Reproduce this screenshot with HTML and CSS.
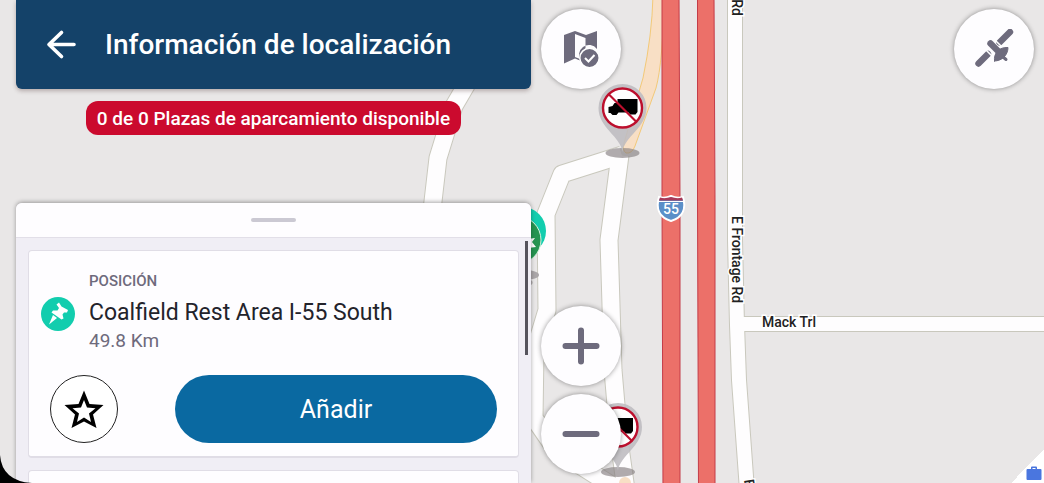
FILE: index.html
```html
<!DOCTYPE html>
<html lang="es">
<head>
<meta charset="utf-8">
<meta name="viewport" content="width=device-width, initial-scale=1">
<title>Información de localización</title>
<link rel="stylesheet" href="styles.css">
</head>
<body>
<main class="screen">
  <svg class="map" viewBox="0 0 1044 483" preserveAspectRatio="xMinYMin slice" aria-hidden="true">
    <defs>
      <g id="no-trucks">
        <ellipse cx="0" cy="45" rx="17" ry="5" fill="#857f81" fill-opacity=".65"/>
        <path d="M0 44C-2 28-24 20-24 0A24 24 0 0 1 24 0C24 20 2 28 0 44Z" fill="#bfbcc1" fill-opacity=".9"/>
        <circle r="19.500" fill="#fff" stroke="#bd0f2d" stroke-width="2.400"/>
        <path d="M-5-9H15V4L13 6.500H7.500L6 4.500H-4L-6 7H-10L-12 5H-14V-1L-10-2-8-5H-5Z" fill="#000"/>
        <path d="M-14-14 14 14" stroke="#bd0f2d" stroke-width="2.200"/>
      </g>
    </defs>
    <g class="road-edge">
      <path d="M475 70 454 106 438 158 432 210"/>
      <path d="M622 155 562 174 546 214 547 310 535 350 534 418 556 450 622 492"/>
      <path d="M620 155 609 240 613 370 619 440 626 490"/>
      <path class="frontage" d="M735 -5V240L737 325 739 380 747 490"/>
      <path class="frontage" d="M736 324H1050"/>
    </g>
    <g class="road">
      <path d="M475 70 454 106 438 158 432 210"/>
      <path d="M622 155 562 174 546 214 547 310 535 350 534 418 556 450 622 492"/>
      <path d="M620 155 609 240 613 370 619 440 626 490"/>
      <path class="frontage" d="M735 -5V240L737 325 739 380 747 490"/>
      <path class="frontage" d="M736 324H1050"/>
    </g>
    <path class="ramp" d="M653-4Q652 35 643 78L624 143Q622 150 626 153 632 154 635 146L656 88Q663 62 664-4Z"/>
    <circle cx="625" cy="483" r="6" fill="#f8dfc5"/>
    <path class="highway" d="M662-5H679L680 200V490H663L662 200Z"/>
    <path class="highway" d="M697.500-5H714L715 200V490H698.500L697.500 200Z"/>
    <g class="shield">
      <path d="M659 197Q665 199 671 196 677 199 683 197C686 207 684 217 671 221 658 217 656 207 659 197Z" fill="#5b8fc8" stroke="#fff" stroke-width="2"/>
      <path d="M660 197.500Q665 199 671 197 677 199 682 197.500L683 200.500H659Z" fill="#a83a58"/>
      <path d="M658 201.500H684" stroke="#fff"/>
      <text x="671" y="214" text-anchor="middle">55</text>
    </g>
    <g class="street">
      <text transform="translate(732 216) rotate(90)">E Frontage Rd</text>
      <text transform="translate(732 16) rotate(90)" text-anchor="end">Rd</text>
      <text transform="translate(744 480) rotate(82)">E</text>
      <text x="762" y="327">Mack Trl</text>
    </g>
    <g class="rest-pin">
      <ellipse cx="525" cy="275" rx="14" ry="5" fill="#aaa6a8"/>
      <circle cx="530" cy="282.500" r="2.500" fill="#aaa6a8"/>
      <circle cx="522" cy="231" r="24" fill="#12cdae"/>
      <circle cx="517" cy="240" r="24" fill="#259450" stroke="#d8f3df"/>
      <path d="M528 239l7-1-3 4 4 5-8 1Z" fill="#fff"/>
    </g>
    <use href="#no-trucks" x="622.500" y="108"/>
    <use href="#no-trucks" x="618" y="427"/>
  </svg>

  <section class="panel">
    <header class="bar">
      <button class="back" type="button" aria-label="Atrás">
        <svg viewBox="0 0 32 32" width="32" height="32"><path d="M16.500 3.500 4 15.500 16.500 27.500M4 15.500H29" fill="none" stroke="#fff" stroke-width="3.600" stroke-linecap="round" stroke-linejoin="round"/></svg>
      </button>
      <h1 class="title">Información de localización</h1>
    </header>
    <p class="status">0 de 0 Plazas de aparcamiento disponible</p>
    <div class="sheet">
      <div class="grip"><span class="grip-bar"></span></div>
      <div class="list">
        <article class="card">
          <div class="place">
            <svg class="place-icon" viewBox="0 0 34 34" width="34" height="34" aria-hidden="true">
              <circle cx="17" cy="17" r="17" fill="#12cdae"/>
              <path d="M15.500 7.500 18 5.500 20.500 9.500 27 13 26 15.500 23 15.500 21.500 17.500 22.500 21.500 20.500 22.500 10.500 15.500 12 13.500 16.500 13.500 18 11Z" fill="#fff"/>
              <path d="M12 18 16 21 8 27.500Z" fill="#fff"/>
            </svg>
            <div class="place-text">
              <p class="label">POSICIÓN</p>
              <h2 class="name">Coalfield Rest Area I-55 South</h2>
              <p class="distance">49.8 Km</p>
            </div>
          </div>
          <div class="actions">
            <button class="favorite" type="button" aria-label="Favorito">
              <svg viewBox="0 0 40 40" width="40" height="40"><path fill-rule="evenodd" d="M20 1.500 25.500 15 39.500 16 29 25.500 32.500 39 20 32.500 7.500 39 11 25.500.5 16 14.500 15ZM20 11 17 18.500 8.500 19.200 15 24.500 13 33 20 28.500 27 33 25 24.500 31.500 19.200 23 18.500Z"/></svg>
            </button>
            <button class="add" type="button">Añadir</button>
          </div>
        </article>
        <article class="card card-next"></article>
        <span class="thumb"></span>
      </div>
    </div>
  </section>

  <nav class="controls" aria-label="Controles del mapa">
    <button class="round" type="button" aria-label="Capas del mapa">
      <svg viewBox="0 0 40 40" width="40" height="40" fill="#6e6b7d">
        <path d="M3 6 14 2 25 6 36 2V20A10 10 0 0 0 20 32L14 29.500 3 34.500ZM14 5V28L19 30 24.500 20V9Z" fill-rule="evenodd"/>
        <circle cx="28.500" cy="29" r="9.700" stroke="#fff" stroke-width="1.500"/>
        <path d="m24 29 3.500 3.500 6-6.500" fill="none" stroke="#fff" stroke-width="2"/>
      </svg>
    </button>
    <button class="round zoom-in" type="button" aria-label="Acercar">
      <svg viewBox="0 0 40 40" width="40" height="40"><path class="sign" d="M4.500 20H35.500M20 4.500V35.500"/></svg>
    </button>
    <button class="round" type="button" aria-label="Alejar">
      <svg viewBox="0 0 40 40" width="40" height="40"><path class="sign" d="M4.500 20H35.500"/></svg>
    </button>
  </nav>

  <button class="round gps" type="button" aria-label="Satélite">
    <svg viewBox="0 0 40 40" width="40" height="40" fill="none" stroke="#6e6b7d" stroke-linecap="round">
      <path d="M36 3 25.500 13.500M4.500 34.500 14 25" stroke-width="6.400"/>
      <path d="m22 12 5 5M12.500 21.500l5 5" stroke="#fff" stroke-width="1.500"/>
      <path d="m16.500 14.500 8 8" stroke-width="6.400"/>
      <path d="M20.500 32C19.500 24 25 18 34 18.500 34 26 28 32 20.500 32Z" fill="#6e6b7d"/>
      <path d="m28 27 4 3.500" stroke-width="3"/>
    </svg>
  </button>

  <svg class="corner-left" viewBox="0 0 32 28" width="32" height="28" aria-hidden="true"><path d="M0 0Q2 26 32 28H0Z"/></svg>
  <div class="corner-right">
    <svg viewBox="0 0 16 14" width="16" height="14" aria-hidden="true"><path d="M5 3V1.500Q5 .5 6 .5H10Q11 .5 11 1.500V3H14.500Q15.500 3 15.500 4V13Q15.500 14 14.500 14H1.500Q.5 14 .5 13V4Q.5 3 1.500 3ZM6.500 3H9.500V2H6.500Z" fill="#4a76df" fill-rule="evenodd"/></svg>
  </div>
</main>
</body>
</html>
```
FILE: styles.css
```css
* { box-sizing: border-box; }

body {
  margin: 0;
  font-family: Roboto, "Liberation Sans", sans-serif;
}

h1, h2, p { margin: 0; }

button {
  display: grid;
  place-items: center;
  padding: 0;
  border: 0;
  font: inherit;
  cursor: pointer;
}

.screen {
  position: relative;
  display: grid;
  grid-template-columns: calc(50% + 1px) 80px 1fr;
  column-gap: 10px;
  height: 100vh;
  padding-left: 16px;
  overflow: hidden;
  background: #e9e7e7;
}

/* Map canvas */
.map {
  position: absolute;
  inset: 0;
  width: 100%;
  height: 100%;
}
.road-edge, .road { fill: none; stroke-linejoin: round; }
.road-edge { stroke: #c9c8bd; stroke-width: 19px; }
.road { stroke: #fefdfe; stroke-width: 17px; }
.road-edge .frontage { stroke-width: 16px; }
.road .frontage { stroke-width: 14px; }
.ramp { fill: #f8dfc5; stroke: #f3c978; stroke-width: 1px; }
.highway { fill: #ec7069; stroke: #c43c48; stroke-width: 1px; }
.shield text { fill: #fff; font-size: 14px; font-weight: 500; }
.street text {
  fill: #222;
  stroke: #fff;
  stroke-width: 3px;
  paint-order: stroke;
  font-size: 14px;
  font-weight: 500;
}

/* Location panel */
.panel {
  position: relative;
  display: flex;
  flex-direction: column;
  min-width: 0;
  min-height: 0;
}
.bar {
  flex: none;
  display: flex;
  align-items: center;
  gap: 28px;
  height: 89px;
  padding-left: 29px;
  border-radius: 0 0 6px 6px;
  background: #144269;
  box-shadow: 0 2px 4px rgb(60 30 30 / 30%);
}
.back { background: none; }
.title {
  color: #fff;
  font-size: 28px;
  font-weight: 500;
  line-height: 36px;
}
.status {
  flex: none;
  align-self: center;
  margin: 12px 0 68px;
  padding: 1px 11px 0;
  border-radius: 12px;
  background: #cb0a2e;
  color: #fff;
  font-size: 19px;
  font-weight: 500;
  line-height: 33px;
  white-space: nowrap;
}
.sheet {
  flex: 1;
  display: flex;
  flex-direction: column;
  min-height: 0;
  border-radius: 6px 6px 0 0;
  background: #f0eef5;
  box-shadow: 0 -1px 4px rgb(0 0 0 / 35%);
}
.grip {
  flex: none;
  display: grid;
  place-items: center;
  height: 35px;
  border-bottom: 1px solid #e2dfe8;
  border-radius: 6px 6px 0 0;
  background: #fefdff;
}
.grip-bar {
  width: 45px;
  height: 4px;
  border-radius: 2px;
  background: #cbc9d3;
}
.list {
  position: relative;
  flex: 1;
  display: flex;
  flex-direction: column;
  gap: 12px;
  min-height: 0;
  padding: 12px 12px 0;
  overflow: hidden;
}
.card {
  flex: none;
  padding: 20px 21px 13px 12px;
  border: 1px solid #e0dde6;
  border-width: 1px 1px 2px;
  border-radius: 4px;
  background: #fefdff;
}
.card-next { height: 60px; }
.thumb {
  position: absolute;
  top: 3px;
  right: 3px;
  width: 3px;
  height: 114px;
  background: #55535c;
}
.place {
  display: flex;
  align-items: flex-end;
  gap: 14px;
}
.place-icon { flex: none; margin-bottom: 16px; }
.label {
  color: #6e6a7c;
  font-size: 15px;
  font-weight: 500;
  line-height: 20px;
}
.name {
  color: #23232b;
  font-size: 23px;
  font-weight: 400;
  line-height: 44px;
}
.distance {
  color: #6e6a7c;
  font-size: 19px;
  line-height: 12px;
}
.actions {
  display: flex;
  justify-content: space-between;
  gap: 57px;
  padding: 28px 0 0 9px;
}
.favorite {
  flex: none;
  width: 68px;
  height: 68px;
  border: 1px solid #222;
  border-radius: 50%;
  background: #fff;
}
.add {
  flex: 1;
  border-radius: 34px;
  background: #0a69a1;
  color: #fff;
  font-size: 25px;
}

/* Round map buttons */
.controls {
  position: relative;
  display: flex;
  flex-direction: column;
  gap: 8px;
  padding: 9px 0;
}
.round {
  position: relative;
  width: 80px;
  height: 80px;
  border-radius: 50%;
  background: #fefdff;
  box-shadow: 0 0 5px rgb(0 0 0 / 40%);
}
.zoom-in { margin-top: auto; }
.gps {
  justify-self: end;
  margin: 9px 10px 0 0;
}
.sign {
  fill: none;
  stroke: #6e6b7d;
  stroke-width: 6px;
  stroke-linecap: round;
}

/* Screen corners */
.corner-left {
  position: absolute;
  left: 0;
  bottom: 0;
}
.corner-right {
  position: absolute;
  right: 0;
  bottom: 0;
  display: flex;
  align-items: flex-end;
  justify-content: flex-end;
  width: 33px;
  height: 33px;
  padding: 0 2px 3px 0;
  background: linear-gradient(135deg, transparent 50%, #fff 50%);
}
```
